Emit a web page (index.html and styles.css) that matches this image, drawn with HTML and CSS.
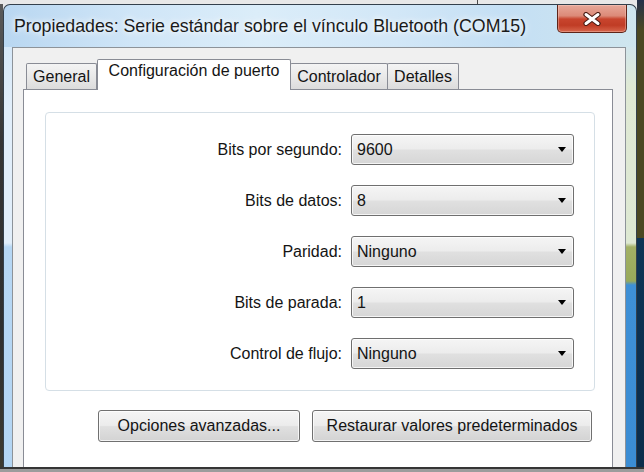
FILE: index.html
```html
<!DOCTYPE html>
<html lang="es">
<head>
<meta charset="utf-8">
<title>Propiedades: Serie estándar sobre el vínculo Bluetooth (COM15)</title>
<link rel="stylesheet" href="styles.css">
</head>
<body>
<div class="screen">
  <div class="stage">
    <div class="edge-left"></div>
    <div class="window">
      <div class="titlebar">
        <div class="title">Propiedades: Serie estándar sobre el vínculo Bluetooth (COM15)</div>
        <button class="close" aria-label="Cerrar">
          <svg width="18" height="14" viewBox="0 0 18 14">
            <path d="M3 2.5 L15 11.5 M15 2.5 L3 11.5" stroke="#4a1c14" stroke-width="5.2" stroke-linecap="round" fill="none"/>
            <path d="M3 2.5 L15 11.5 M15 2.5 L3 11.5" stroke="#ffffff" stroke-width="3" stroke-linecap="round" fill="none"/>
          </svg>
        </button>
      </div>
      <div class="client">
        <div class="tabs">
          <div class="tab tab-general">General</div>
          <div class="tab tab-port active">Configuración de puerto</div>
          <div class="tab tab-driver">Controlador</div>
          <div class="tab tab-details">Detalles</div>
        </div>
        <div class="panel">
          <div class="group">
            <div class="field"><label>Bits por segundo:</label><div class="combo"><span class="value">9600</span><i class="arrow"></i></div></div>
            <div class="field"><label>Bits de datos:</label><div class="combo"><span class="value">8</span><i class="arrow"></i></div></div>
            <div class="field"><label>Paridad:</label><div class="combo"><span class="value">Ninguno</span><i class="arrow"></i></div></div>
            <div class="field"><label>Bits de parada:</label><div class="combo"><span class="value">1</span><i class="arrow"></i></div></div>
            <div class="field"><label>Control de flujo:</label><div class="combo"><span class="value">Ninguno</span><i class="arrow"></i></div></div>
          </div>
          <div class="actions">
            <button class="btn btn-adv">Opciones avanzadas...</button>
            <button class="btn btn-reset">Restaurar valores predeterminados</button>
          </div>
        </div>
      </div>
    </div>
    <div class="edge-right"></div>
  </div>
  <div class="bottom-edge"></div>
</div>
</body>
</html>
```
FILE: styles.css
```css
html, body {
  margin: 0;
  padding: 0;
}

body {
  width: 644px;
  height: 472px;
  overflow: hidden;
  font-family: "Liberation Sans", Arial, sans-serif;
  font-size: 16px;
  color: #141414;
}

.screen {
  display: flex;
  flex-direction: column;
  height: 472px;
  background:
    linear-gradient(to right, transparent 477px, #4a4a4a 477px, #4a4a4a 478px, transparent 478px) left top / 100% 4px no-repeat,
    #e8e8e8;
}

.stage {
  display: flex;
  height: 467px;
}

.edge-left {
  width: 3px;
  margin-top: 4px;
  background: linear-gradient(#5a5a5a, #353535 30%, #2f2f2f 70%, #3d3a30);
}

.edge-right {
  width: 7px;
  background: linear-gradient(#24304a 0, #4b4822 30px, #4b4822 238px, #0e3455 238px, #0b2c4a);
}

.window {
  width: 634px;
  box-sizing: border-box;
  margin-top: 4px;
  border: 1px solid #34404c;
  border-bottom: none;
  border-radius: 7px 7px 0 0;
  padding: 0 10px 0 8px;
  display: flex;
  flex-direction: column;
  background:
    linear-gradient(#d6e8f8 0, #e1eefa 60px, #e1eefa 196px, #b6d7f4 200px, #b3d5f3 100%) left 0 top 42px / 8px 100% no-repeat,
    linear-gradient(#d2e6ec 0, #dfe9d4 40px, #dde8d2 196px, #a2b065 200px, #98a95a 234px, #3e90d6 238px, #3a8cd3 100%) right 0 top 42px / 10px 100% no-repeat,
    linear-gradient(to right, #b9d7f1 0%, #cfe5f7 20%, #dbedf9 40%, #d2e7f7 62%, #c4dff4 80%, #cfe6ee 100%);
}

.titlebar {
  display: flex;
  align-items: flex-start;
  height: 42px;
  flex: none;
}

.title {
  padding: 11px 0 0 2px;
  font-size: 17.75px;
  line-height: 20px;
  color: #1a1a1a;
  white-space: nowrap;
  text-shadow: 0 0 5px rgba(255, 255, 255, 0.95), 0 0 10px rgba(255, 255, 255, 0.8);
}

.close {
  margin-left: auto;
  margin-right: -1px;
  width: 70px;
  height: 28px;
  box-sizing: border-box;
  padding: 0;
  border: 1px solid #5e2418;
  border-top: none;
  border-radius: 0 0 5px 5px;
  background: linear-gradient(#e7a899 0%, #dc8a78 40%, #c8452e 52%, #c03c25 75%, #d7664c 100%);
  box-shadow: inset 0 0 0 1px rgba(255, 220, 210, 0.35);
  display: flex;
  align-items: center;
  justify-content: center;
}

.client {
  flex: 1;
  display: flex;
  flex-direction: column;
  border: 1px solid #8d9399;
  border-bottom: none;
  background: #f0f0f0;
  padding: 11px 12px 0 10px;
}

.tabs {
  display: flex;
  align-items: flex-end;
  height: 30px;
  padding-left: 3px;
  flex: none;
}

.tab {
  box-sizing: border-box;
  height: 26px;
  border: 1px solid #898c95;
  border-bottom: none;
  border-radius: 2px 2px 0 0;
  background: linear-gradient(#f4f4f4, #e9e9e9 50%, #dcdcdc);
  display: flex;
  justify-content: center;
  padding-top: 4px;
  line-height: 18px;
  white-space: nowrap;
}

.tab.active {
  position: relative;
  z-index: 1;
  height: 31px;
  margin-bottom: -1px;
  padding-top: 2px;
  background: #ffffff;
}

.tab-general { width: 71px; }
.tab-port { width: 194px; }
.tab-driver { width: 98px; margin-left: -1px; }
.tab-details { width: 72px; margin-left: -1px; }

.panel {
  flex: 1;
  border: 1px solid #898c95;
  border-bottom: none;
  background: #ffffff;
  padding: 22px 17px 0 21px;
}

.group {
  border: 1px solid #d5dfe6;
  border-radius: 4px;
  padding: 21px 20px 21px 0;
  display: flex;
  flex-direction: column;
  gap: 20px;
}

.field {
  display: grid;
  grid-template-columns: 1fr 223px;
  column-gap: 9px;
  align-items: center;
}

.field label {
  text-align: right;
  white-space: nowrap;
}

.combo {
  height: 31px;
  box-sizing: border-box;
  border: 1px solid #6f6f6f;
  border-radius: 3px;
  background: linear-gradient(#f5f5f5, #ececec 48%, #e0e0e0 52%, #d6d6d6);
  box-shadow: inset 0 0 0 1px rgba(255, 255, 255, 0.75);
  display: flex;
  align-items: center;
  padding: 0 7px 0 5px;
}

.combo .value {
  flex: 1;
}

.arrow {
  width: 0;
  height: 0;
  border-left: 4.5px solid transparent;
  border-right: 4.5px solid transparent;
  border-top: 5px solid #000000;
}

.actions {
  display: flex;
  justify-content: flex-end;
  gap: 12px;
  margin-top: 19px;
  padding-right: 3px;
}

.btn {
  height: 32px;
  box-sizing: border-box;
  border: 1px solid #707070;
  border-radius: 3px;
  background: linear-gradient(#f5f5f5, #ececec 48%, #e0e0e0 52%, #d3d3d3);
  box-shadow: inset 0 0 0 1px rgba(255, 255, 255, 0.75);
  font: inherit;
  color: #141414;
  padding: 0;
}

.btn-adv { width: 202px; }
.btn-reset { width: 280px; }

.bottom-edge {
  height: 3px;
  border-top: 2px solid #353535;
  background: #9c9c9c;
}
```
